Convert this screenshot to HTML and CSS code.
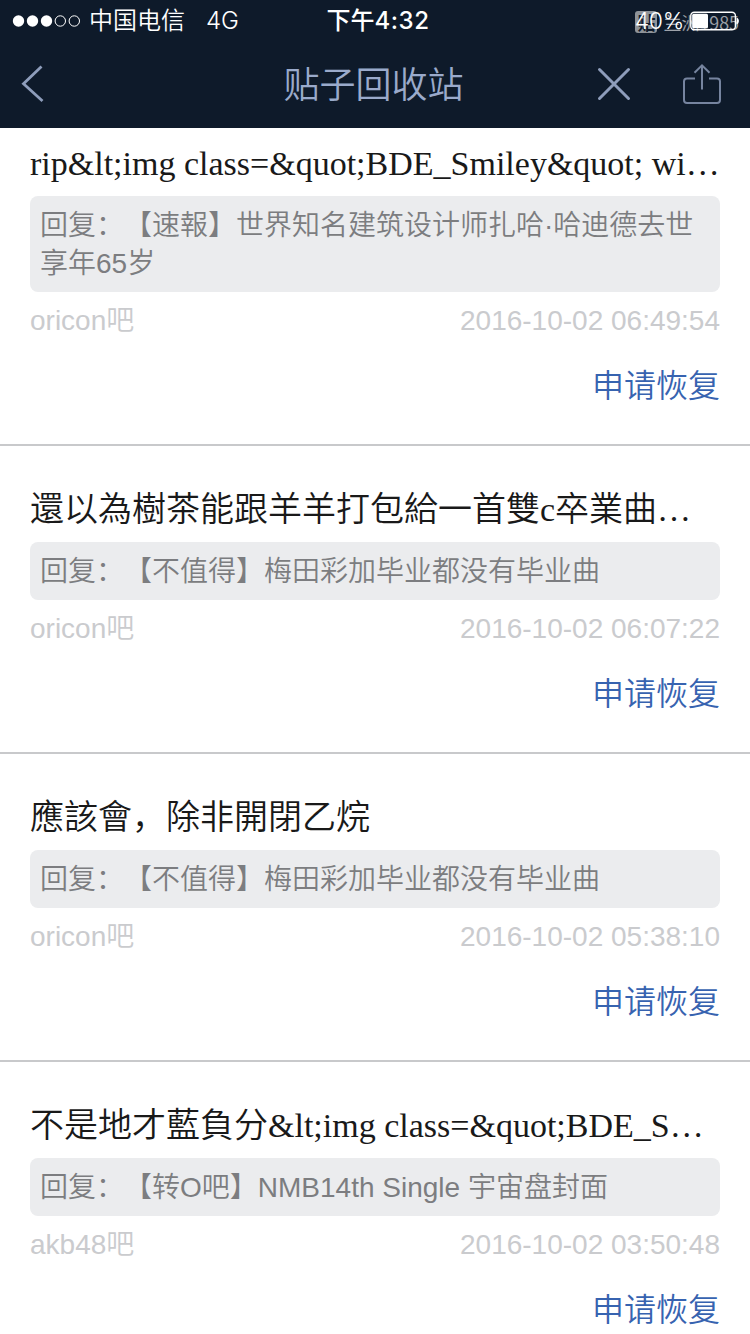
FILE: index.html
```
<!DOCTYPE html>
<html lang="zh-CN">
<head>
  <meta charset="UTF-8">
  <title>贴子回收站</title>
  <meta name="viewport" content="width=device-width, initial-scale=1.0">
  <link rel="stylesheet" href="styles.css">
</head>
<body>
  <header class="header">
    <div class="status-bar">
      <div class="watermark">
        <span class="watermark-logo">贴</span>
        <span class="watermark-name">兰洲1985</span>
      </div>
      <div class="status-left">
        <svg class="signal" width="70" height="14" viewBox="0 0 70 14">
          <g fill="#fff">
            <circle cx="6.5" cy="7" r="5.7"/>
            <circle cx="20.5" cy="7" r="5.7"/>
            <circle cx="34.5" cy="7" r="5.7"/>
          </g>
          <g fill="none" stroke="#fff" stroke-width="1">
            <circle cx="48.3" cy="7" r="5.2"/>
            <circle cx="62.3" cy="7" r="5.2"/>
          </g>
        </svg>
        <span class="carrier">中国电信</span>
        <span class="network">4G</span>
      </div>
      <div class="status-time">下午<span class="clock">4:32</span></div>
      <div class="status-right">
        <span class="percent">40%</span>
        <svg class="battery" width="50" height="20" viewBox="0 0 50 20">
          <rect x="0.8" y="1.2" width="44.6" height="17.6" rx="3.5" fill="none" stroke="#fff" stroke-width="1.4"/>
          <rect x="2.2" y="2.8" width="15.8" height="14.4" rx="1.5" fill="#fff"/>
          <path d="M46.500 6.500c3.200 1 3.200 6 0 7z" fill="#fff"/>
        </svg>
      </div>
    </div>
    <nav class="nav-bar">
      <a class="nav-back" href="#" aria-label="返回">
        <svg width="26" height="40" viewBox="0 0 26 40" fill="none" stroke="#8e9dbb" stroke-width="2.8">
          <path d="M21.5 2.5L3.5 19.8L22.5 37"/>
        </svg>
      </a>
      <h1 class="nav-title">贴子回收站</h1>
      <div class="nav-actions">
        <a href="#" aria-label="关闭">
          <svg width="36" height="36" viewBox="0 0 36 36" fill="none" stroke="#8e9dbb" stroke-width="3" stroke-linecap="round">
            <path d="M3.5 3.5L32.5 32.5M32.5 3.5L3.5 32.5"/>
          </svg>
        </a>
        <a href="#" aria-label="分享">
          <svg width="40" height="42" viewBox="0 0 40 42" fill="none" stroke="#76849f" stroke-width="2">
            <path d="M13 15.5H5a3 3 0 0 0-3 3V37a3 3 0 0 0 3 3h30a3 3 0 0 0 3-3V18.500a3 3 0 0 0-3-3h-8"/>
            <path d="M20 26.500V2.500M12.500 9.800L20 2.300L27.500 9.800"/>
          </svg>
        </a>
      </div>
    </nav>
  </header>

  <main class="post-list">
    <article class="post post-first">
      <h2 class="post-title">rip&amp;lt;img class=&amp;quot;BDE_Smiley&amp;quot; wi…</h2>
      <p class="post-reply">回复：【速報】世界知名建筑设计师扎哈·哈迪德去世享年65岁</p>
      <div class="post-meta"><span>oricon吧</span><time>2016-10-02 06:49:54</time></div>
      <a class="post-restore" href="#">申请恢复</a>
    </article>
    <article class="post">
      <h2 class="post-title">還以為樹茶能跟羊羊打包給一首雙c卒業曲…</h2>
      <p class="post-reply">回复：【不值得】梅田彩加毕业都没有毕业曲</p>
      <div class="post-meta"><span>oricon吧</span><time>2016-10-02 06:07:22</time></div>
      <a class="post-restore" href="#">申请恢复</a>
    </article>
    <article class="post">
      <h2 class="post-title">應該會，除非開閉乙烷</h2>
      <p class="post-reply">回复：【不值得】梅田彩加毕业都没有毕业曲</p>
      <div class="post-meta"><span>oricon吧</span><time>2016-10-02 05:38:10</time></div>
      <a class="post-restore" href="#">申请恢复</a>
    </article>
    <article class="post">
      <h2 class="post-title">不是地才藍負分&amp;lt;img class=&amp;quot;BDE_S…</h2>
      <p class="post-reply">回复：【转O吧】NMB14th Single 宇宙盘封面</p>
      <div class="post-meta"><span>akb48吧</span><time>2016-10-02 03:50:48</time></div>
      <a class="post-restore" href="#">申请恢复</a>
    </article>
  </main>
</body>
</html>
```
FILE: styles.css
```
* {
  margin: 0;
  padding: 0;
  box-sizing: border-box;
}
body {
  height: 1334px;
  display: flex;
  flex-direction: column;
  overflow: hidden;
  background: #fff;
  font-family: "Liberation Sans", "Noto Sans CJK SC DemiLight", "Noto Sans CJK SC", sans-serif;
  font-weight: 350;
  text-spacing-trim: space-all;
}
a {
  text-decoration: none;
}
svg {
  display: block;
}

/* header */
.header {
  height: 128px;
  flex-shrink: 0;
  background: #0e1a2a;
  color: #fff;
}
.status-bar {
  position: relative;
  height: 40px;
  display: grid;
  grid-template-columns: 1fr auto 1fr;
  align-items: center;
  padding: 1px 10px 0 12px;
  font-family: Inter, "Noto Sans CJK SC", sans-serif;
  font-size: 24px;
  line-height: 40px;
}
.status-left,
.status-right {
  z-index: 1;
  display: flex;
  align-items: center;
}
.signal {
  margin-right: 7px;
}
.network {
  margin-left: 21px;
}
.status-time {
  padding-left: 4px;
  font-weight: 500;
}
.clock {
  letter-spacing: 0.5px;
}
.status-right {
  justify-content: flex-end;
}
.percent {
  margin-right: 6px;
  font-size: 23px;
  letter-spacing: -0.3px;
}
/* user name stamp under the battery */
.watermark {
  position: absolute;
  top: 11px;
  right: 11px;
  display: flex;
  align-items: center;
  gap: 6px;
  height: 22px;
  opacity: 0.6;
  font-family: "Noto Sans CJK SC", sans-serif;
  font-size: 18px;
  line-height: 22px;
}
.watermark-logo {
  width: 22px;
  height: 22px;
  border-radius: 3px;
  background: #e4e4e4;
  color: #0e1a2a;
  font-weight: 700;
  text-align: center;
}
.nav-bar {
  height: 88px;
  display: grid;
  grid-template-columns: 1fr auto 1fr;
  align-items: center;
  padding: 0 28px 0 20px;
}
.nav-title {
  padding: 3px 0 0 5px;
  font-size: 36px;
  font-weight: 350;
  line-height: 50px;
  color: #9aaacb;
}
.nav-actions {
  display: flex;
  align-items: center;
  justify-content: flex-end;
  gap: 50px;
}

/* deleted posts */
.post-list {
  flex: 1;
  min-height: 0;
  overflow: hidden;
}
.post {
  display: flex;
  flex-direction: column;
  padding: 36px 30px 38px;
  border-bottom: 2px solid #c8c9cb;
}
.post-first {
  padding-top: 8px;
}
.post-title {
  font-family: "Liberation Serif", "Noto Sans CJK SC DemiLight", "Noto Sans CJK SC", serif;
  font-size: 34px;
  font-weight: 350;
  line-height: 56px;
  color: #191919;
  white-space: nowrap;
}
.post-reply {
  margin-top: 4px;
  padding: 11px 10px 9px;
  border-radius: 8px;
  background: #ebecee;
  font-size: 28px;
  line-height: 38px;
  color: #7c7d80;
}
.post-meta {
  display: flex;
  justify-content: space-between;
  margin-top: 9px;
  font-size: 28px;
  line-height: 40px;
  color: #cacbce;
}
.post-restore {
  align-self: flex-end;
  margin-top: 25px;
  font-size: 32px;
  line-height: 40px;
  color: #3763b0;
}
```
